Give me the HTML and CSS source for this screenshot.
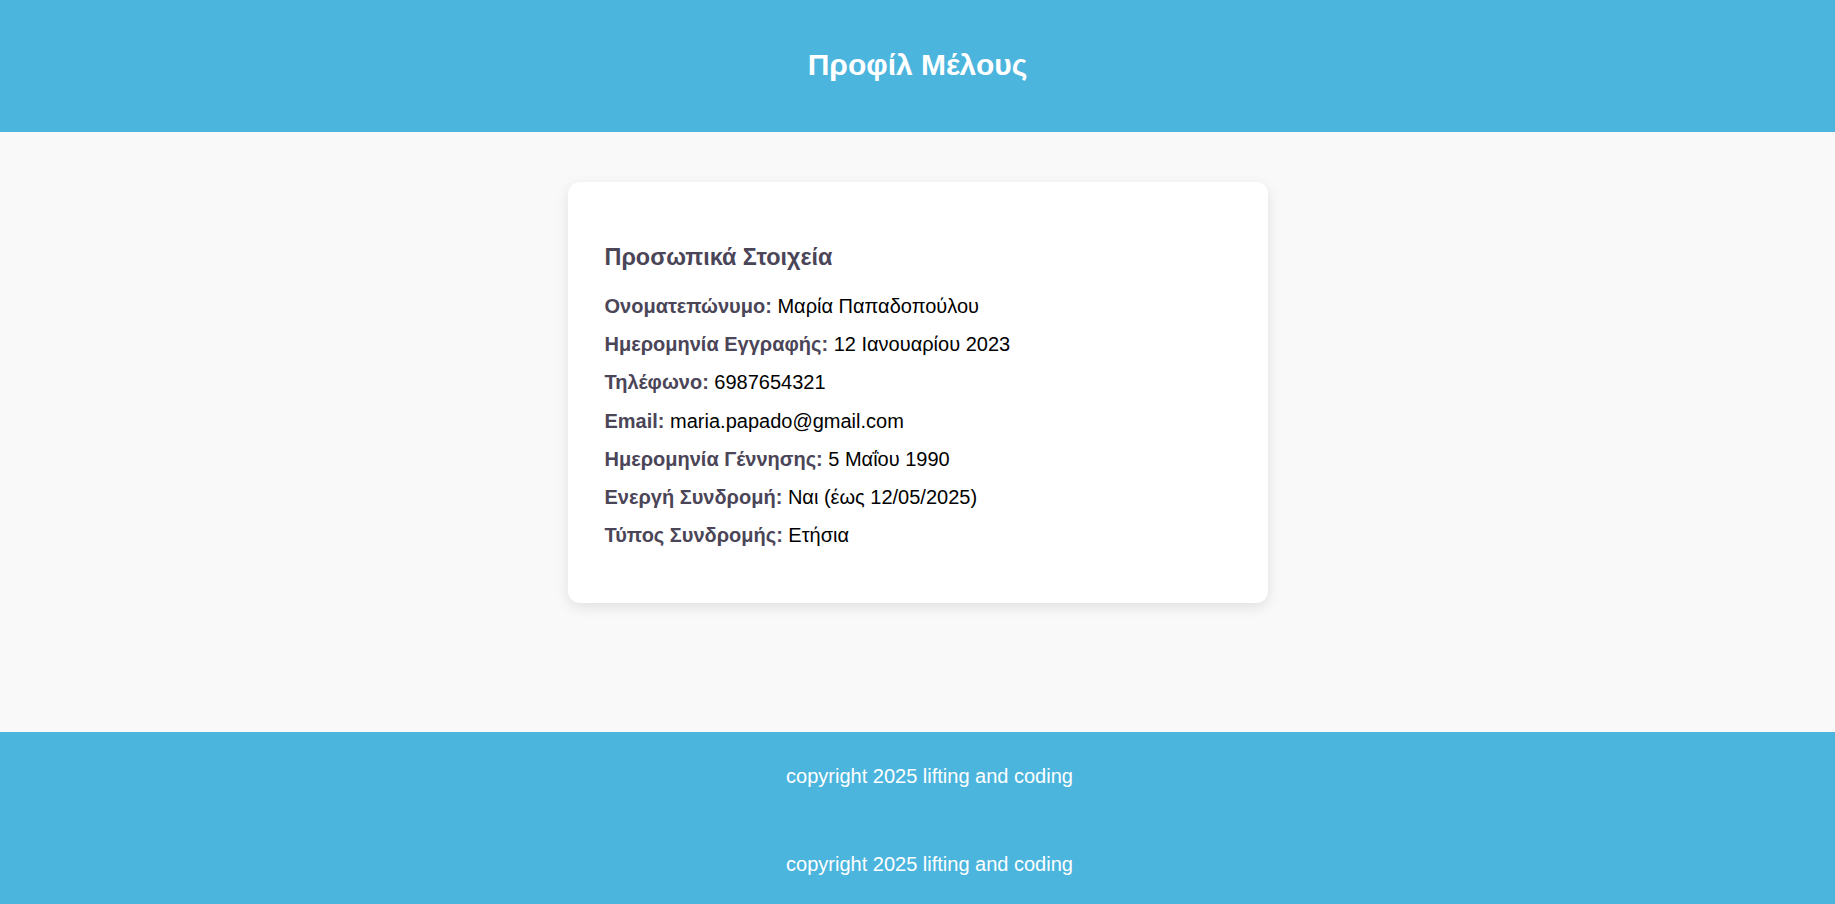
FILE: index.html
```html
<!DOCTYPE html>
<html lang="el">
<head>
<meta charset="utf-8">
<title>Προφίλ Μέλους</title>
<link rel="stylesheet" href="styles.css">
</head>
<body>
<header class="site-header">
  <h1 class="site-title">Προφίλ Μέλους</h1>
</header>
<main class="main">
  <section class="card">
    <h2 class="card-title">Προσωπικά Στοιχεία</h2>
    <p class="row"><span class="label">Ονοματεπώνυμο:</span> Μαρία Παπαδοπούλου</p>
    <p class="row"><span class="label">Ημερομηνία Εγγραφής:</span> 12 Ιανουαρίου 2023</p>
    <p class="row"><span class="label">Τηλέφωνο:</span> 6987654321</p>
    <p class="row"><span class="label">Email:</span> maria.papado@gmail.com</p>
    <p class="row"><span class="label">Ημερομηνία Γέννησης:</span> 5 Μαΐου 1990</p>
    <p class="row"><span class="label">Ενεργή Συνδρομή:</span> Ναι (έως 12/05/2025)</p>
    <p class="row"><span class="label">Τύπος Συνδρομής:</span> Ετήσια</p>
  </section>
</main>
<footer class="site-footer">
  <p class="footer-text">copyright 2025 lifting and coding</p>
</footer>
<footer class="site-footer">
  <p class="footer-text">copyright 2025 lifting and coding</p>
</footer>
</body>
</html>
```

FILE: styles.css
```css
* {
  box-sizing: border-box;
}

body {
  margin: 0;
  font-family: "Liberation Sans", Arial, sans-serif;
  background: #f9f9f9;
  color: #000;
}

.site-header {
  background: #4bb5dd;
  padding: 49px 0 51px;
  text-align: center;
}

.site-title {
  margin: 0;
  font-size: 30px;
  line-height: 32px;
  font-weight: bold;
  color: #fff;
}

.main {
  min-height: 600px;
  padding-top: 50px;
}

.card {
  width: 700px;
  margin: 0 auto;
  background: #fff;
  border-radius: 12px;
  box-shadow: 0 4px 14px rgba(0, 0, 0, 0.1);
  padding: 63px 37px 53px;
}

.card-title {
  margin: 0 0 23px;
  font-size: 23.4px;
  line-height: 24px;
  font-weight: bold;
  color: #4b4558;
}

.row {
  margin: 0 0 9.4px;
  font-size: 20px;
  line-height: 28.8px;
}

.row:last-child {
  margin-bottom: 0;
}

.label {
  font-weight: bold;
  color: #4b4558;
}

.site-footer {
  background: #4bb5dd;
  padding: 16px 0;
  text-align: center;
}

.footer-text {
  margin: 16.5px 0;
  padding-left: 24px;
  font-size: 20px;
  line-height: 23px;
  color: #fff;
}
```
